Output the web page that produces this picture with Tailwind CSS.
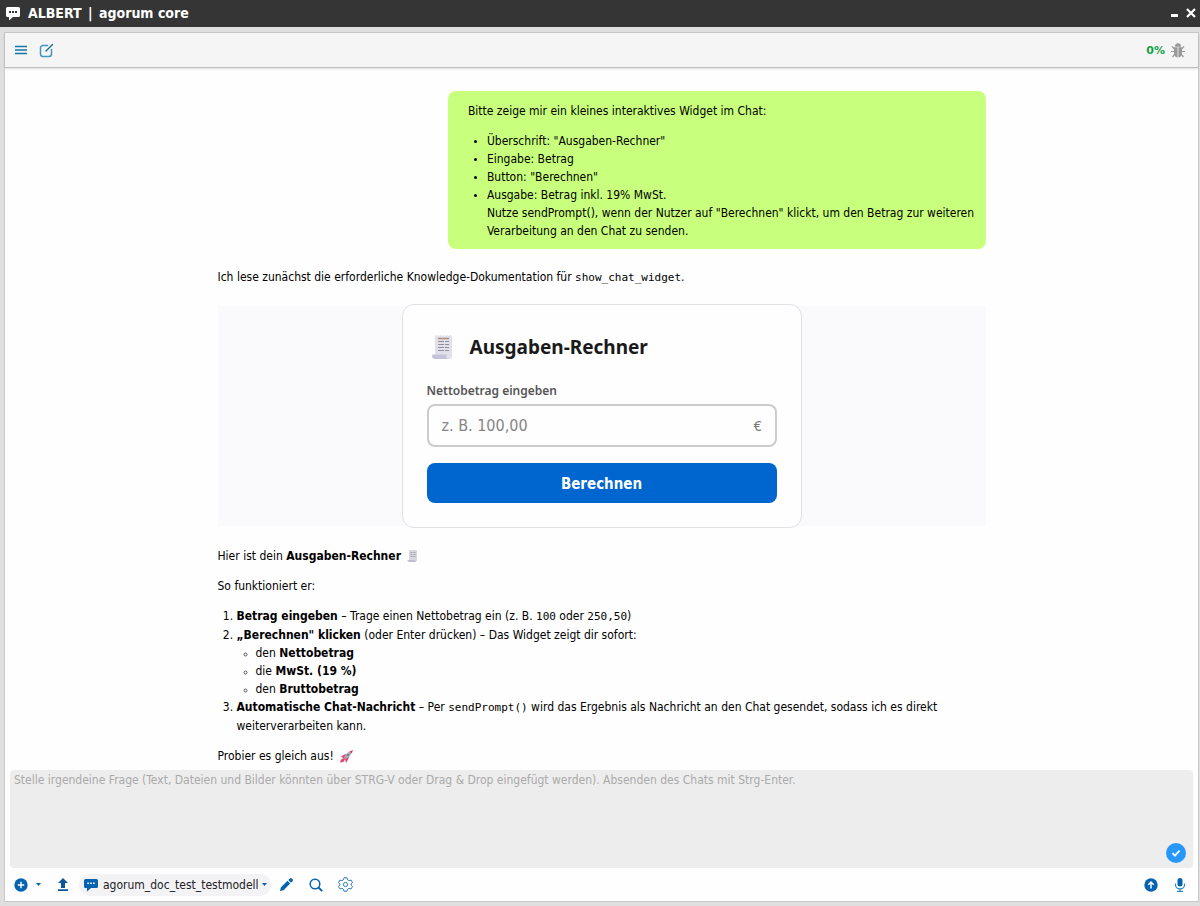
<!DOCTYPE html>
<html lang="de">
<head>
<meta charset="utf-8">
<meta name="viewport" content="width=device-width, initial-scale=1">
<title>ALBERT | agorum core</title>
<script src="https://cdn.jsdelivr.net/npm/@tailwindcss/browser@4"></script>
</head>
<body class="flex h-screen flex-col overflow-hidden bg-[#dfdfe0] font-['DejaVu_Sans_Condensed','Noto_Sans',sans-serif] text-xs leading-[18px] text-black">

<header class="flex h-[27px] shrink-0 items-center bg-[#353535] pl-1.5 pr-1 text-white">
  <svg class="mr-2 size-[14px]" viewBox="0 0 14 14" aria-hidden="true"><path fill="#fff" d="M1.5 0h11A1.5 1.5 0 0 1 14 1.500v7a1.500 1.500 0 0 1-1.500 1.500H7l-4 3.500V10H1.500A1.500 1.500 0 0 1 0 8.500v-7A1.500 1.500 0 0 1 1.500 0z"/><path fill="#353535" d="M3 4h2v2H3zM6 4h2v2H6zM9 4h2v2H9z"/></svg>
  <h1 class="flex-1 pb-0.5 text-sm font-bold">ALBERT <span class="px-0.5">|</span> agorum core</h1>
  <button type="button" aria-label="Minimieren" class="mr-2"><svg class="h-[10px] w-[7px]" viewBox="0 0 7 10"><path fill="#fff" d="M0 5h7v3H0z"/></svg></button>
  <button type="button" aria-label="Schließen" class="pb-0.5"><svg class="size-[10px]" viewBox="0 0 10 10"><path d="M1 1l8 8M9 1l-8 8" stroke="#fff" stroke-width="2.200"/></svg></button>
</header>

<main class="mb-1 ml-1 mr-px mt-[5px] flex min-h-0 flex-1 flex-col border border-[#c9c9cc] bg-[#fefefe]">
  <div class="z-10 flex h-[35px] shrink-0 items-center border-b border-[#bdbdc2] bg-[#f5f5f6] pl-2.5 pr-[13px] shadow-sm">
    <button type="button" aria-label="Menü" class="mr-3"><svg class="size-3" viewBox="0 0 12 12"><path d="M0 2.500h12M0 6h12M0 9.500h12" stroke="#1676a8" stroke-width="1.400"/></svg></button>
    <button type="button" aria-label="Neuer Chat"><svg class="size-[15px]" viewBox="0 0 15 15" fill="none" stroke-linecap="round"><path d="M8.500 2.500H4A2.500 2.500 0 0 0 1.500 5v6A2.500 2.500 0 0 0 4 13.500h6a2.500 2.500 0 0 0 2.500-2.500V6.500" stroke="#4697bd" stroke-width="1.500"/><path d="M7 8l6.500-6.500" stroke="#19728f" stroke-width="1.400"/></svg></button>
    <span class="ml-auto mr-1.5 pt-px font-['DejaVu_Sans',sans-serif] text-[11px] font-bold text-[#17a14a]">0%</span>
    <button type="button" aria-label="Debug"><svg class="h-[15px] w-[14px]" viewBox="0 0 14 15" fill="none" stroke="#999" stroke-width="1.200"><path fill="#999" stroke="none" d="M4 3.700a3 3.400 0 0 1 6 0zM3 4.300h3.600v10.200C4.200 14.200 3 12.500 3 10zM7.400 4.300H11V10c0 2.500-1.200 4.200-3.600 4.500z"/><path d="M3.500 6L1 3.500M10.500 6L13 3.500M3.500 8.500H0M10.500 8.500H14M4 11l-2.500 3M10 11l2.500 3"/></svg></button>
  </div>

  <section class="min-h-0 flex-1 overflow-hidden px-5 pt-[23px]" aria-label="Chat">
    <div class="mx-auto flex max-w-[768px] flex-col">
      <div class="w-[70%] self-end rounded-lg bg-[#c8ff7c] pb-[9px] pl-5 pr-2 pt-[11px]">
        <p class="mb-3">Bitte zeige mir ein kleines interaktives Widget im Chat:</p>
        <ul class="list-disc pl-[19px] marker:text-[10px]">
          <li>Überschrift: "Ausgaben-Rechner"</li>
          <li>Eingabe: Betrag</li>
          <li>Button: "Berechnen"</li>
          <li>Ausgabe: Betrag inkl. 19% MwSt.<br>Nutze sendPrompt(), wenn der Nutzer auf "Berechnen" klickt, um den Betrag zur weiteren Verarbeitung an den Chat zu senden.</li>
        </ul>
      </div>

      <p class="mt-[19px]">Ich lese zunächst die erforderliche Knowledge-Dokumentation für <code class="font-['DejaVu_Sans_Mono',monospace] text-[11px]">show_chat_widget</code>.</p>

      <div class="mt-[19px] flex justify-center bg-[#fafafd]">
        <form class="-my-0.5 flex w-[400px] flex-col rounded-xl border border-[#e0e0e6] bg-[#fefefe] p-6 font-['Noto_Sans',sans-serif]">
          <div class="mb-4 flex h-9 items-center gap-4">
            <svg class="ml-1 h-[26px] w-[23px]" viewBox="0 0 23 26" aria-hidden="true"><path fill="#e2e0ea" d="M4 1l1.500 1L7 1l1.500 1L10 1l1.500 1L13 1l1.500 1L16 1l1.500 1L19 1l2 1v20a3 3 0 0 1-3 3H8l-4-4z"/><path d="M7 4.500h11" stroke="#b18d7c" stroke-width="1.500"/><path d="M7 7.500h6M14 7.500h4M7 10.500h6M14 10.500h4M7 13.500h6M14 13.500h4M7 16.500h6M14 16.500h4" stroke="#918f99" stroke-width="1.200"/><path fill="#c5c3dc" d="M1.500 20.500H16c-1.500 1.500-.5 4.500 2 4.500H4c-2.500 0-3.500-2.500-2.500-4.500z"/></svg>
            <h2 class="text-[19px] font-bold text-[#1a1a1a]">Ausgaben-Rechner</h2>
          </div>
          <label for="netto" class="mb-1 text-xs font-semibold leading-[19px] text-[#555]">Nettobetrag eingeben</label>
          <div class="mb-4 flex h-[43px] items-center rounded-lg border-2 border-[#ccc] px-[13px] pt-px text-base text-[#777]">
            <input id="netto" type="text" placeholder="z. B. 100,00" class="min-w-0 flex-1 bg-transparent font-['DejaVu_Sans_Condensed',sans-serif] outline-none placeholder:text-[#858585]">
            <span class="text-sm">€</span>
          </div>
          <button type="button" class="h-10 rounded-lg bg-[#0066cf] pt-0.5 font-['DejaVu_Sans_Condensed',sans-serif] text-[15px] font-bold text-white">Berechnen</button>
        </form>
      </div>

      <p class="mt-[21px] flex items-center">Hier ist dein&nbsp;<b>Ausgaben-Rechner</b>
        <svg class="ml-1.5 h-3 w-[11px]" viewBox="0 0 11 12" aria-hidden="true"><path fill="#d8d6e0" d="M2 0h8v11H2z"/><path d="M3.500 2.500h2M6.500 2.500h2M3.500 4.500h2M6.500 4.500h2M3.500 6.500h2M6.500 6.500h2" stroke="#a5a2ab"/><path fill="#bdbbd0" d="M0 10h8l1 2H2z"/></svg></p>
      <p class="mt-3">So funktioniert er:</p>
      <ol class="mt-3 list-decimal pl-[19px]">
        <li class="leading-[19px]"><b>Betrag eingeben</b> – Trage einen Nettobetrag ein (z. B. <code class="font-['DejaVu_Sans_Mono',monospace] text-[11px]">100</code> oder <code class="font-['DejaVu_Sans_Mono',monospace] text-[11px]">250,50</code>)</li>
        <li><b>„Berechnen" klicken</b> (oder Enter drücken) – Das Widget zeigt dir sofort:
          <ul class="list-[circle] pl-[19px]">
            <li class="marker:text-[9px] marker:text-[#555]">den <b>Nettobetrag</b></li>
            <li class="marker:text-[9px] marker:text-[#555]">die <b>MwSt. (19 %)</b></li>
            <li class="marker:text-[9px] marker:text-[#555]">den <b>Bruttobetrag</b></li>
          </ul>
        </li>
        <li class="leading-[19px]"><b>Automatische Chat-Nachricht</b> – Per <code class="font-['DejaVu_Sans_Mono',monospace] text-[11px]">sendPrompt()</code> wird das Ergebnis als Nachricht an den Chat gesendet, sodass ich es direkt weiterverarbeiten kann.</li>
      </ol>
      <p class="mt-[11px] flex items-center">Probier es gleich aus!
        <svg class="ml-1.5 size-[13px]" viewBox="0 0 13 13" aria-hidden="true"><path fill="#e0486b" d="M2.500 5.500L5.500 4 9 7.500 7.500 10.500 6 13 5 9 3.500 8 1 7z"/><path fill="#aaa9b8" d="M4 7.500C6 3.500 8 1.500 11.500 1.200 11.500 4.800 9.500 7 5.500 9z"/><path fill="#e03a55" d="M9.500 1.500L13 0l-1.300 3.500z"/><path fill="#e0486b" d="M0 12.500L1 9.500l3-1.500 1 1-1.500 3z"/><circle cx="8" cy="5" r="1.100" fill="#547fa5"/></svg></p>
    </div>
  </section>

  <footer class="shrink-0 px-[5px]">
    <div class="relative">
      <textarea aria-label="Frage" placeholder="Stelle irgendeine Frage (Text, Dateien und Bilder könnten über STRG-V oder Drag &amp; Drop eingefügt werden). Absenden des Chats mit Strg-Enter." class="block h-[98px] w-full resize-none rounded bg-[#ededed] px-1 py-0.5 leading-4 outline-none placeholder:text-[#aaa]"></textarea>
      <button type="button" aria-label="Bestätigen" class="absolute bottom-[5px] right-[7px]"><svg class="size-5" viewBox="0 0 20 20"><circle cx="10" cy="10" r="10" fill="#2598fa"/><path d="M6.500 10.200l2.500 2.500 4.500-5" fill="none" stroke="#fff" stroke-width="1.800"/></svg></button>
    </div>
    <div class="flex h-[33px] items-center pl-1 pr-[7px]">
      <button type="button" aria-label="Hinzufügen" class="mr-2 flex items-center gap-2"><svg class="size-[14px]" viewBox="0 0 14 14"><circle cx="7" cy="7" r="6.700" fill="#0563b0"/><path d="M7 3.800v6.400M3.800 7h6.400" stroke="#fff" stroke-width="1.400"/></svg><svg class="h-[3px] w-[5px]" viewBox="0 0 5 3"><path fill="#0563b0" d="M0 0h5L2.500 3z"/></svg></button>
      <button type="button" aria-label="Hochladen" class="ml-2 mr-2.5"><svg class="h-[13px] w-3" viewBox="0 0 12 13"><path fill="#0d559c" d="M6 0l5 5H8v5H4V5H1zM1 11.300h10V13H1z"/></svg></button>
      <div class="relative flex h-[22px] items-center rounded-full bg-[#f3f3f6] pl-[5px]">
        <svg class="mr-[5px] size-[14px]" viewBox="0 0 14 14" aria-hidden="true"><path fill="#0563b0" d="M1.500 1h11A1.500 1.500 0 0 1 14 2.500v6a1.500 1.500 0 0 1-1.500 1.500H7l-4 3.500V10H1.500A1.500 1.500 0 0 1 0 8.500v-6A1.500 1.500 0 0 1 1.500 1z"/><path fill="#fff" d="M3.300 4.500h1.600v1.500H3.300zM6.200 4.500h1.600v1.500H6.200zM9.100 4.500h1.600v1.500H9.100z"/></svg>
        <select aria-label="Modell" class="appearance-none bg-transparent pr-3 text-[#222] outline-none"><option>agorum_doc_test_testmodell</option></select>
        <svg class="pointer-events-none absolute right-1 h-[3px] w-[5px]" viewBox="0 0 5 3"><path fill="#0563b0" d="M0 0h5L2.500 3z"/></svg>
      </div>
      <button type="button" aria-label="Bearbeiten" class="ml-[9px]"><svg class="size-[13px]" viewBox="0 0 13 13"><path fill="#0563b0" d="M0 13l.8-3.500L7.500 2.800l2.700 2.700L3.500 12.200zM8.300 2L10 .4a1.200 1.200 0 0 1 1.700 0l.9.900a1.200 1.200 0 0 1 0 1.700L11 4.700z"/></svg></button>
      <button type="button" aria-label="Suchen" class="ml-4"><svg class="size-[14px]" viewBox="0 0 14 14" fill="none" stroke="#0563b0"><circle cx="6" cy="6" r="4.800" stroke-width="1.500"/><path d="M9.500 9.500l3.700 3.700" stroke-width="1.900"/></svg></button>
      <button type="button" aria-label="Einstellungen" class="ml-[15px]"><svg class="size-[15px]" viewBox="0 0 15 15" fill="none" stroke="#2b7db8" stroke-linejoin="round"><path d="M6 .8h3l.6 2 1.500.8 2-.5 1.400 2.500L13.100 7v1l1.400 1.400-1.400 2.500-2-.5-1.500.8-.6 2H6l-.6-2-1.500-.8-2 .5L.500 9.400 1.900 8V7L.500 5.600l1.400-2.500 2 .5 1.500-.8z"/><circle cx="7.500" cy="7.500" r="2.100"/></svg></button>
      <button type="button" aria-label="Senden" class="ml-auto mr-4"><svg class="size-[14px]" viewBox="0 0 14 14"><circle cx="7" cy="7" r="6.700" fill="#0563b0"/><path d="M7 10.500V4.200M4.300 6.800L7 4.100l2.700 2.700" fill="none" stroke="#fff" stroke-width="1.500"/></svg></button>
      <button type="button" aria-label="Spracheingabe"><svg class="h-[14px] w-3" viewBox="0 0 12 14"><rect x="3.500" y="0" width="5" height="8.500" rx="2.500" fill="#0563b0"/><path d="M1.500 5.500V7a4.500 3.800 0 0 0 9 0V5.500M6 10.800v2.500M3 13.300h6" fill="none" stroke="#2f87c0" stroke-width="1.200"/></svg></button>
    </div>
  </footer>
</main>
</body>
</html>
